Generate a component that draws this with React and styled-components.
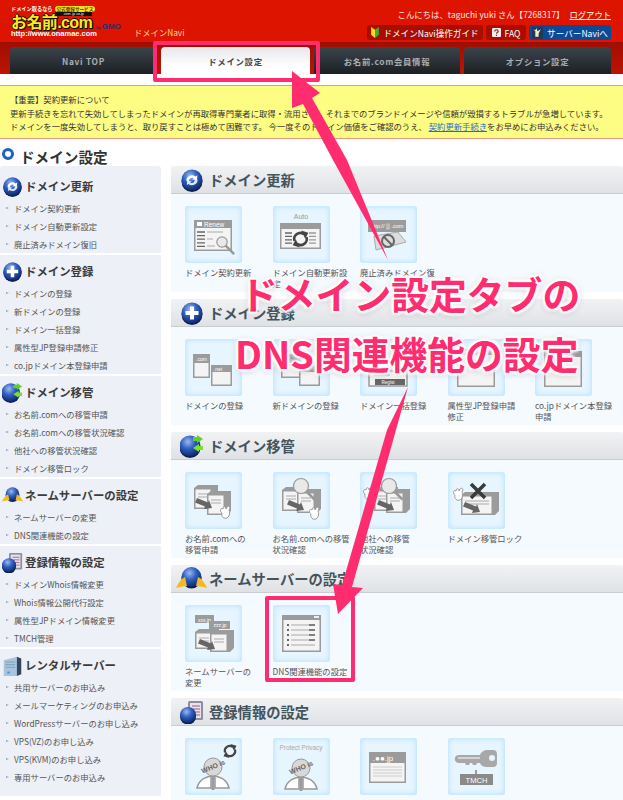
import React from 'react';
import styled, { createGlobalStyle } from 'styled-components';

const FONT = '"Noto Sans CJK JP", "Liberation Sans", sans-serif';
const PINK = '#ff2d6f';

const GlobalStyle = createGlobalStyle`
    html, body {
        margin: 0;
        height: 800px;
        overflow: hidden;
        background: #fff;
        font-family: ${FONT};
        font-size: 8.3px;
        color: #555;
    }
`;

const Page = styled.div`
    position: relative;
    width: 623px;
    height: 800px;
    overflow: hidden;
`;

/* header */
const TopBar = styled.div`
    height: 42px;
    background: #dc1400;
    display: flex;
    justify-content: space-between;
    padding: 0 12px 0 11px;
`;

const Brand = styled.div`
    display: flex;
    align-items: flex-start;
    padding-top: 5px;
`;

const Logo = styled.div`
    position: relative;
    width: 85px;
    height: 32px;
    color: #fff;
`;

const LogoTag = styled.div`
    display: flex;
    align-items: center;
    gap: 2px;
    height: 7px;
    font-size: 5.2px;
    line-height: 7px;
    font-weight: bold;
    white-space: nowrap;
`;

const LogoBadge = styled.span`
    background: #f5e020;
    color: #553300;
    border-radius: 3px;
    padding: 0 2px;
    font-size: 4.6px;
    line-height: 6px;
`;

const LogoDomains = styled.div`
    position: absolute;
    top: 7px;
    left: 44px;
    width: 37px;
    height: 4px;
    background: #111;
    color: #fff;
    font-size: 3.2px;
    line-height: 4px;
    text-align: center;
`;

const LogoName = styled.div`
    margin-top: 4px;
    height: 13px;
    font-family: "Liberation Sans", ${FONT};
    font-size: 16px;
    line-height: 13px;
    font-weight: bold;
    color: #ffe81a;
    letter-spacing: -0.6px;
    white-space: nowrap;
    text-shadow: 1px 0 0 #111, -1px 0 0 #111, 0 1px 0 #111, 0 -1px 0 #111, 1px 1px 0 #111;
`;

const LogoUrl = styled.div`
    margin-top: 1px;
    font-family: "Liberation Sans", sans-serif;
    font-size: 7.5px;
    line-height: 7px;
    font-weight: bold;
    white-space: nowrap;
`;

const ByGmo = styled.div`
    margin-top: 17px;
    width: 38px;
    font-family: "Liberation Sans", sans-serif;
    font-size: 4px;
    font-weight: bold;
    color: #27306e;
    white-space: nowrap;
    b {
        font-size: 8px;
        margin-left: 1px;
    }
`;

const NaviName = styled.div`
    margin-top: 21px;
    font-size: 8.3px;
    line-height: 12px;
    color: #ffd596;
    white-space: nowrap;
`;

const UserArea = styled.div`
    display: flex;
    flex-direction: column;
    align-items: flex-end;
    padding-top: 8px;
    gap: 5px;
`;

const Greeting = styled.div`
    height: 12px;
    line-height: 12px;
    color: #ffeaea;
    letter-spacing: 0.1px;
    white-space: nowrap;
    a {
        color: #fff;
        margin-left: 5px;
        letter-spacing: 0;
        text-decoration: underline;
    }
`;

const HeaderButtons = styled.div`
    display: flex;
    gap: 3px;
`;

const HeaderButton = styled.div`
    display: flex;
    align-items: center;
    justify-content: center;
    gap: 4px;
    width: ${(p) => p.$width}px;
    height: 15px;
    border-radius: 3px;
    background: ${(p) => (p.$blue ? '#0b4a96' : '#a80e00')};
    color: #fff;
    font-size: 8.6px;
    white-space: nowrap;
`;

const TabBar = styled.div`
    height: 32px;
    box-sizing: border-box;
    background: linear-gradient(#a00e00, #bd1400);
    padding: 5px 12px 0 10px;
    display: flex;
    gap: 4px;
`;

const Tab = styled.div`
    width: ${(p) => p.$width}px;
    border-radius: 4px 4px 0 0;
    background: ${(p) => (p.$active
        ? 'linear-gradient(#e6e6ec, #ffffff 70%)'
        : 'linear-gradient(#3c444c, #1c2024)')};
    color: ${(p) => (p.$active ? '#444' : '#a9adb0')};
    font-weight: bold;
    font-size: 8.4px;
    letter-spacing: 0.7px;
    display: flex;
    align-items: center;
    justify-content: center;
    white-space: nowrap;
`;

/* notice */
const Notice = styled.div`
    margin-top: 11px;
    height: 54px;
    box-sizing: border-box;
    background: #fdfc83;
    border-top: 1px solid #eb9a82;
    border-bottom: 1px solid #eb9a82;
    padding: 7px 0 0 10px;
    font-size: 8.33px;
    line-height: 13.5px;
    color: #333;
    white-space: nowrap;
    a {
        color: #1f6fd0;
        text-decoration: underline;
    }
`;

const Title = styled.h1`
    margin: 0;
    height: 27px;
    padding: 8px 0 0 2px;
    box-sizing: border-box;
    display: flex;
    align-items: center;
    gap: 6px;
    font-size: 14.6px;
    line-height: 18px;
    font-weight: bold;
    color: #333;
`;

const TitleBullet = styled.span`
    width: 6px;
    height: 6px;
    border: 3px solid #1a63c4;
    border-radius: 50%;
    background: #fff;
    margin-top: -6px;
`;

const Columns = styled.div`
    display: flex;
    gap: 10px;
`;

/* left menu */
const Sidebar = styled.div`
    width: 161px;
    flex: none;
    display: flex;
    flex-direction: column;
    gap: 2px;
    border-radius: 3px;
    overflow: hidden;
`;

const MenuGroup = styled.div`
    background: #edf0f6;
    padding-top: ${(p) => (p.$first ? 4 : 0)}px;
    padding-bottom: ${(p) => (p.$last ? 10 : 0)}px;
`;

const MenuHead = styled.div`
    height: 29px;
    box-sizing: border-box;
    padding: 3px 0 0 2px;
    display: flex;
    align-items: center;
    font-size: 11.4px;
    font-weight: bold;
    color: #3c3c3c;
    white-space: nowrap;
`;

const MenuIcon = styled.span`
    width: 23px;
    flex: none;
    display: flex;
    svg {
        width: 21px;
        height: 21px;
    }
`;

const MenuItem = styled.div`
    height: 18px;
    padding-left: 6px;
    display: flex;
    align-items: center;
    gap: 5px;
    white-space: nowrap;
    color: #555;
    &::before {
        content: '';
        border-left: 3px solid #9aa3ad;
        border-top: 1.5px solid transparent;
        border-bottom: 1.5px solid transparent;
    }
`;

/* right panels */
const Main = styled.div`
    flex: 1;
    display: flex;
    flex-direction: column;
    gap: 7px;
`;

const Section = styled.section`
    background: #f5fafe;
    height: 126px;
`;

const SectionHead = styled.div`
    height: 28px;
    box-sizing: border-box;
    border-bottom: 1px solid #c9cdd0;
    border-radius: 3px 3px 0 0;
    background: linear-gradient(#f1f2f4, #dfe2e5);
    display: flex;
    align-items: center;
    padding-left: ${(p) => (p.$wide ? 5 : 9)}px;
    gap: ${(p) => (p.$wide ? 2 : 5)}px;
    font-size: 14.3px;
    font-weight: bold;
    color: #43545c;
    white-space: nowrap;
    svg {
        width: ${(p) => (p.$wide ? 31 : 24)}px;
        height: 24px;
        flex: none;
    }
`;

const TileRow = styled.div`
    display: grid;
    grid-template-columns: repeat(5, 87.5px);
    padding: 12px 0 0 14px;
`;

const Tile = styled.div`
    width: 57px;
    height: 57px;
    border-radius: 3px;
    background: #e7f5ff;
    box-shadow: inset 0 0 5px 1px #b9e3ff;
    svg {
        display: block;
        width: 57px;
        height: 57px;
    }
`;

const TileLabel = styled.div`
    margin-top: 4px;
    line-height: 11.4px;
    color: #555;
    white-space: nowrap;
`;

/* annotations drawn over the page */
const TabHighlight = styled.div`
    position: absolute;
    left: 153px;
    top: 41px;
    width: 167px;
    height: 41px;
    box-sizing: border-box;
    border: 4px solid ${PINK};
    border-radius: 2px;
`;

const TileHighlight = styled.div`
    position: absolute;
    left: 265px;
    top: 596px;
    width: 90px;
    height: 86px;
    box-sizing: border-box;
    border: 4px solid ${PINK};
    border-radius: 2px;
`;

const ArrowLayer = styled.svg`
    position: absolute;
    left: 0;
    top: 0;
    width: 623px;
    height: 800px;
    pointer-events: none;
`;

const Caption = styled.div`
    position: absolute;
    left: ${(p) => p.$left}px;
    top: ${(p) => p.$top}px;
    font-family: "Noto Sans CJK JP", "Liberation Sans", sans-serif;
    font-size: 37.8px;
    line-height: 46px;
    font-weight: 700;
    color: ${PINK};
    white-space: nowrap;
    text-shadow: 0 0 2px #fff, 0 0 3px #fff, 0 0 4px #fff, 2px 2px 3px #fff, -2px -2px 3px #fff,
        2px -2px 3px #fff, -2px 2px 3px #fff, 0 1px 7px rgba(0, 0, 0, 0.35);
`;

/* icons */
const Defs = () => (
    <defs>
        <radialGradient id="globe" cx="40%" cy="30%" r="75%">
            <stop offset="0" stopColor="#9db8f0" />
            <stop offset="0.45" stopColor="#2f5fc0" />
            <stop offset="1" stopColor="#0b2260" />
        </radialGradient>
    </defs>
);

const Globe = ({ cx = 12, cy = 12, r = 10.5 }) => (
    <>
        <ellipse cx={cx} cy={cy + 1.5} rx={r} ry={r} fill="#0d1f4c" />
        <circle cx={cx} cy={cy} r={r} fill="url(#globe)" />
    </>
);

const RenewIcon = () => (
    <svg viewBox="0 0 24 24">
        <Defs />
        <Globe />
        <path d="M6.5 13a5.5 5 0 0 1 9-4.5l1.8-1.2-.3 5.2-5-1.2 1.7-1.1a3 3 0 0 0-4.6 2.6z" fill="#fff" />
        <path d="M17.500 11.500a5.500 5 0 0 1-9 4.400l-1.600 1.100.2-4.600 4.600 1-1.600 1.100a3 3 0 0 0 4.700-2.500z" fill="#dfe8fa" />
    </svg>
);

const AddIcon = () => (
    <svg viewBox="0 0 24 24">
        <Defs />
        <Globe />
        <path d="M10 5.500h4V10h4.500v4H14v4.500h-4V14H5.500v-4H10z" fill="#fff" />
    </svg>
);

const TransferIcon = () => (
    <svg viewBox="0 0 24 24">
        <Defs />
        <Globe cx={10} />
        <path d="M13 3h4V1l6 4-6 4V7h-4z" fill="#5fd02a" />
        <path d="M23 12h-4v-2l-6 4 6 4v-2h4z" fill="#7ae02c" />
    </svg>
);

const NameServerIcon = () => (
    <svg viewBox="0 0 31 24">
        <Defs />
        <Globe cx={15.5} cy={10} r={10} />
        <path d="M0 21c2-5 5-9 9-11l2 9c-4 0-7 1-11 2z" fill="#f5b81e" />
        <path d="M31 21c-2-5-5-9-9-11l-2 9c4 0 7 1 11 2z" fill="#f5b81e" />
    </svg>
);

const InfoIcon = () => (
    <svg viewBox="0 0 24 24">
        <Defs />
        <rect x="8" y="1" width="15" height="19" rx="1.500" fill="#8e8e9c" />
        <rect x="10" y="3" width="11" height="15" fill="#e8e2ee" />
        <path d="M12 6h8M12 9h8M12 12h8M12 15h8" stroke="#96607c" strokeWidth="1" />
        <Globe cx={8} cy={15} r={8} />
    </svg>
);

const ServerIcon = () => (
    <svg viewBox="0 0 24 24">
        <path d="M2 6l15-4v22H2z" fill="#a9c4dc" />
        <path d="M17 2l5 2v18l-5 2z" fill="#33465e" />
        <path d="M4 8h11M4 11h11M4 14h11" stroke="#7f9bb5" strokeWidth="1" />
        <rect x="6" y="19" width="3" height="2" fill="#2e9ee8" />
    </svg>
);

const G = '#9b9b9b';
const D = '#666';
const L = '#f4f4f4';

const Win = ({ x, y, w, h, bar = 6 }) => (
    <>
        <rect x={x} y={y} width={w} height={h} fill={G} />
        <rect x={x + 1.5} y={y + bar} width={w - 3} height={h - bar - 1.5} fill={L} />
    </>
);

const Label = ({ x, y, size = 6, fill = '#fff', anchor = 'middle', children }) => (
    <text x={x} y={y} fontSize={size} fill={fill} textAnchor={anchor} fontFamily="Liberation Sans, sans-serif">
        {children}
    </text>
);

const Rows = ({ x, y, w, n = 4, gap = 3.5, color = D }) => (
    <path
        d={Array.from({ length: n }, (_, i) => `M${x} ${y + i * gap}h${w}`).join('')}
        stroke={color}
        strokeWidth="1.3"
    />
);

const Server = ({ x, y, w = 20, h = 24 }) => (
    <>
        <path d={`M${x} ${y + 3}l4-3h${w}v${h - 4}l-4 4H${x}z`} fill={G} />
        <rect x={x + 1.5} y={y + 4.5} width={w - 5} height={h - 6} fill={L} />
        <path d={`M${x + 4} ${y + 9}h${w - 10}M${x + 4} ${y + 12}h${w - 10}`} stroke="#aaa" strokeWidth="1" />
    </>
);

const MoveArrow = ({ x, y }) => (
    <path d={`M${x} ${y}l11 4.500 1-2.500 3 8-8 1 1-2.500-10-4z`} fill={D} />
);

const Rabbit = ({ x, y }) => (
    <path
        d={`M${x} ${y + 6}c-3-2-1-6 1-4 0-3 3-3 3 0l1-2c2-2 4 0 2 3 1 2 1 6-2 8-3 1-6-1-5-5z`}
        fill="#fff"
        stroke="#999"
        strokeWidth="1"
    />
);

const Magnifier = ({ x, y, r = 8 }) => (
    <>
        <path d={`M${x + r * 0.6} ${y + r * 0.6}l9 9`} stroke="#999" strokeWidth="2.500" />
        <circle cx={x} cy={y} r={r} fill="#e9e9e9" stroke="#999" strokeWidth="1.200" />
    </>
);

const Person = ({ y = 0 }) => (
    <>
        <path d={`M12 ${50 + y}c2-9 10-12 16-12s14 3 16 12h-14v-10h-4v10z`} fill="#fff" stroke="#999" strokeWidth="1.500" />
        <rect x="26.500" y={38 + y} width="3" height="14" fill={G} />
        <circle cx="28" cy={29 + y} r="9" fill="#d8d8d8" stroke="#999" />
        <g transform={`rotate(-22 28 ${28 + y})`}>
            <text x="28" y={31 + y} fontSize="7" fontWeight="bold" textAnchor="middle" fill={D} fontFamily="Liberation Sans, sans-serif">WHO is</text>
        </g>
    </>
);

const RefreshHalf = ({ cx, cy, r }) => (
    <>
        <path
            d={`M${cx - r} ${cy + r * 0.3}A${r} ${r} 0 0 1 ${cx + r * 0.55} ${cy - r * 0.8}`}
            fill="none"
            stroke="#444"
            strokeWidth={r * 0.42}
        />
        <path d={`M${cx + r * 0.1} ${cy - r * 1.4}L${cx + r * 1.3} ${cy - r * 1.05}L${cx + r * 0.8} ${cy - r * 0.05}z`} fill="#444" />
    </>
);

const Refresh = ({ cx, cy, r }) => (
    <>
        <RefreshHalf cx={cx} cy={cy} r={r} />
        <g transform={`rotate(180 ${cx} ${cy})`}>
            <RefreshHalf cx={cx} cy={cy} r={r} />
        </g>
    </>
);

const tileIcons = {
    renew: (
        <>
            <Win x={9} y={14} w={38} h={31} bar={8} />
            <rect x="12" y="16" width="5" height="4" fill="#fff" />
            <Label x={19} y={20.5} anchor="start" size={6.5}>Renew</Label>
            <Rows x={12} y={26} w={8} n={5} gap={3.6} />
            <path d="M22 26h16M22 33h6M22 40h8" stroke="#999" strokeWidth="0.800" />
            <Magnifier x={37} y={36} r={5.2} />
        </>
    ),
    auto: (
        <>
            <Label x={28} y={13} size={7} fill="#999">Auto</Label>
            <Win x={7} y={17} w={41} h={26} bar={6} />
            <Rows x={12} y={27} w={7} n={4} gap={3.4} />
            <Rows x={36} y={27} w={7} n={4} gap={3.4} color="#999" />
            <Refresh cx={27.5} cy={33} r={6} />
        </>
    ),
    broken: (
        <>
            <rect x="8" y="14" width="38" height="12" fill={G} />
            <Label x={27} y={22} size={5.5}>http:// ▒ .com</Label>
            <path d="M14 30l24-4 8 10-30 8z" fill="#ddd" stroke="#aaa" />
            <circle cx="28" cy="35" r="6" fill="none" stroke="#666" strokeWidth="2" />
            <path d="M24 31l8 8" stroke="#666" strokeWidth="2" />
        </>
    ),
    domains: (
        <>
            <Win x={8} y={15} w={17} h={24} bar={9} />
            <Label x={16.5} y={22} size={5}>.com</Label>
            <Win x={26} y={26} w={21} h={21} bar={7} />
            <Label x={33} y={32} size={5}>.net</Label>
        </>
    ),
    newDomain: (
        <>
            <Win x={8} y={15} w={20} h={24} bar={9} />
            <Win x={26} y={26} w={21} h={21} bar={7} />
        </>
    ),
    bulk: (
        <>
            <rect x="9" y="32" width="38" height="15" fill={L} stroke={G} strokeWidth="1.500" />
            <path d="M14 36h16" stroke="#999" />
            <rect x="15" y="40" width="30" height="6" fill={D} />
            <Label x={28} y={45} size={4.6}>Regist</Label>
        </>
    ),
    jp: <Win x={9} y={10} w={38} h={38} bar={6} />,
    cojp: (
        <>
            <Win x={9} y={12} w={38} h={36} bar={6} />
            <Label x={28} y={17} size={4.5} fill="#777">.jp</Label>
        </>
    ),
    transfer: (
        <>
            <Server x={9} y={13} />
            <Server x={22} y={19} />
            <MoveArrow x={12} y={26} />
            <Rabbit x={37} y={35} />
        </>
    ),
    transferCheck: (
        <>
            <Server x={9} y={15} />
            <Server x={24} y={17} />
            <Magnifier x={28} y={14} r={7.5} />
            <MoveArrow x={16} y={28} />
            <Rabbit x={38} y={36} />
        </>
    ),
    transferOther: (
        <>
            <Server x={14} y={15} />
            <Server x={26} y={17} />
            <Magnifier x={29} y={14} r={7.5} />
            <MoveArrow x={19} y={28} />
            <Rabbit x={5} y={16} />
        </>
    ),
    lock: (
        <>
            <Server x={13} y={20} w={34} h={23} />
            <MoveArrow x={17} y={30} />
            <Rabbit x={7} y={17} />
            <path d="M23 12l14 14M37 12L23 26" stroke="#3a3a3a" strokeWidth="3.500" />
        </>
    ),
    nameServer: (
        <>
            <rect x="10" y="10" width="19" height="8" fill={G} />
            <Label x={19.5} y={16.5} size={5}>xxx.jp</Label>
            <rect x="24" y="16" width="21" height="8" fill={G} />
            <Label x={35} y={22} size={5}>zzz.jp</Label>
            <Server x={10} y={24} h={20} />
            <Server x={25} y={25} w={20} h={22} />
            <MoveArrow x={15} y={34} />
        </>
    ),
    dns: (
        <>
            <Win x={9} y={10} w={39} h={37} bar={5} />
            <rect x="41" y="11" width="5" height="2" fill="#eee" />
            <path d="M14 19h2v2h-2zM14 24h2v2h-2zM14 29h2v2h-2zM14 34h2v2h-2zM14 39h2v2h-2z" fill={D} />
            <path d="M18 20h24M18 25h24M18 30h24M18 35h24M18 40h24" stroke="#aaa" />
            <path d="M36 20h6M36 25h6M36 30h6M36 35h6" stroke={D} strokeWidth="1.300" />
        </>
    ),
    whois: (
        <>
            <Person />
            <Refresh cx={45} cy={13} r={5} />
        </>
    ),
    privacy: (
        <>
            <Label x={28} y={12} size={6.4} fill="#aaa">Protect Privacy</Label>
            <Person y={1} />
        </>
    ),
    jpWindow: (
        <>
            <Win x={9} y={14} w={37} h={31} bar={11} />
            <Label x={23} y={23} size={8}>.●●.jp</Label>
            <path d="M13 29h29M13 32h29M13 35h29M13 38h29" stroke="#ccc" />
        </>
    ),
    key: (
        <>
            <path d="M7 20c0-2 2-3 4-3h21c1-3 4-5 8-5h5c3 0 4 2 4 4v9c0 2-1 4-4 4h-6c-3 0-6-1-7-4h-3l-1 2h-3l-1-2h-2l-1 2h-3l-1-2h-6c-3 0-5-3-4-5z" fill="#a8a8a8" />
            <path d="M10 20h22" stroke="#f0f0f0" strokeWidth="1.200" />
            <circle cx="44" cy="20" r="3" fill="#e7f5ff" />
            <rect x="27" y="32" width="2" height="4" fill={G} />
            <rect x="12" y="36" width="33" height="11" fill="#8a8a8a" />
            <Label x={28.5} y={44.5} size={7.6}>TMCH</Label>
        </>
    ),
};

const menuGroups = [
    { icon: <RenewIcon />, title: 'ドメイン更新', items: ['ドメイン契約更新', 'ドメイン自動更新設定', '廃止済みドメイン復旧'] },
    { icon: <AddIcon />, title: 'ドメイン登録', items: ['ドメインの登録', '新ドメインの登録', 'ドメイン一括登録', '属性型JP登録申請修正', 'co.jpドメイン本登録申請'] },
    { icon: <TransferIcon />, title: 'ドメイン移管', items: ['お名前.comへの移管申請', 'お名前.comへの移管状況確認', '他社への移管状況確認', 'ドメイン移管ロック'] },
    { icon: <NameServerIcon />, title: 'ネームサーバーの設定', items: ['ネームサーバーの変更', 'DNS関連機能の設定'] },
    { icon: <InfoIcon />, title: '登録情報の設定', items: ['ドメインWhois情報変更', 'Whois情報公開代行設定', '属性型JPドメイン情報変更', 'TMCH管理'] },
    { icon: <ServerIcon />, title: 'レンタルサーバー', items: ['共用サーバーのお申込み', 'メールマーケティングのお申込み', 'WordPressサーバーのお申し込み', 'VPS(VZ)のお申し込み', 'VPS(KVM)のお申し込み', '専用サーバーのお申込み'] },
];

const panels = [
    {
        icon: <RenewIcon />,
        title: 'ドメイン更新',
        tiles: [
            ['renew', ['ドメイン契約更新']],
            ['auto', ['ドメイン自動更新設', '定']],
            ['broken', ['廃止済みドメイン復', '旧']],
        ],
    },
    {
        icon: <AddIcon />,
        title: 'ドメイン登録',
        tiles: [
            ['domains', ['ドメインの登録']],
            ['newDomain', ['新ドメインの登録']],
            ['bulk', ['ドメイン一括登録']],
            ['jp', ['属性型JP登録申請', '修正']],
            ['cojp', ['co.jpドメイン本登録', '申請']],
        ],
    },
    {
        icon: <TransferIcon />,
        title: 'ドメイン移管',
        tiles: [
            ['transfer', ['お名前.comへの', '移管申請']],
            ['transferCheck', ['お名前.comへの移管', '状況確認']],
            ['transferOther', ['他社への移管', '状況確認']],
            ['lock', ['ドメイン移管ロック']],
        ],
    },
    {
        icon: <NameServerIcon />,
        wide: true,
        title: 'ネームサーバーの設定',
        tiles: [
            ['nameServer', ['ネームサーバーの', '変更']],
            ['dns', ['DNS関連機能の設定']],
        ],
    },
    {
        icon: <InfoIcon />,
        title: '登録情報の設定',
        tiles: [
            ['whois', ['ドメインWhois情報', '変更']],
            ['privacy', ['Whois情報公開代行', '設定']],
            ['jpWindow', ['属性型JPドメイン', '情報変更']],
            ['key', ['TMCH管理']],
        ],
    },
];

export default function App() {
    return (
        <Page>
            <GlobalStyle />
            <TopBar>
                <Brand>
                    <Logo>
                        <LogoTag>
                            ドメイン取るなら<LogoBadge>公式登録サービス</LogoBadge>
                        </LogoTag>
                        <LogoDomains>.com .jp .co.jp</LogoDomains>
                        <LogoName>お名前.com</LogoName>
                        <LogoUrl>http://www.onamae.com</LogoUrl>
                    </Logo>
                    <ByGmo>by<b>GMO</b></ByGmo>
                    <NaviName>ドメインNavi</NaviName>
                </Brand>
                <UserArea>
                    <Greeting>
                        こんにちは、taguchi yuki さん【7268317】<a href="#logout">ログアウト</a>
                    </Greeting>
                    <HeaderButtons>
                        <HeaderButton $width={116}>
                            <svg width="8" height="11" viewBox="0 0 7 10">
                                <path d="M0 0l3.500 2.500V10L0 7z" fill="#f5e020" />
                                <path d="M7 0L3.500 2.500V10L7 7z" fill="#3fae3a" />
                            </svg>
                            ドメインNavi操作ガイド
                        </HeaderButton>
                        <HeaderButton $width={40}>
                            <svg width="9" height="9" viewBox="0 0 8 8">
                                <rect width="8" height="8" rx="1" fill="#eee" />
                                <path d="M2.500 3c0-2 3-2 3 0 0 1-1.500 1-1.500 2M4 6v1" stroke="#a80e00" fill="none" />
                            </svg>
                            FAQ
                        </HeaderButton>
                        <HeaderButton $width={82} $blue>
                            <svg width="11" height="12" viewBox="0 0 10 11">
                                <rect width="10" height="11" fill="#24365c" />
                                <path d="M3 9V4L1 2l2 1 1-2 1 3 3-2-2 4v3z" fill="#f2efc8" />
                            </svg>
                            サーバーNaviへ
                        </HeaderButton>
                    </HeaderButtons>
                </UserArea>
            </TopBar>
            <TabBar>
                <Tab $width={147}>Navi TOP</Tab>
                <Tab $width={149} $active>ドメイン設定</Tab>
                <Tab $width={146}>お名前.com会員情報</Tab>
                <Tab $width={147}>オプション設定</Tab>
            </TabBar>
            <Notice>
                【重要】契約更新について
                <br />
                更新手続きを忘れて失効してしまったドメインが再取得専門業者に取得・流用され、それまでのブランドイメージや信頼が毀損するトラブルが急増しています。
                <br />
                ドメインを一度失効してしまうと、取り戻すことは極めて困難です。 今一度そのドメイン価値をご確認のうえ、 <a href="#renew">契約更新手続き</a>をお早めにお申込みください。
            </Notice>
            <Title>
                <TitleBullet />
                ドメイン設定
            </Title>
            <Columns>
                <Sidebar>
                    {menuGroups.map((group, i) => (
                        <MenuGroup key={group.title} $first={i === 0} $last={i === menuGroups.length - 1}>
                            <MenuHead>
                                <MenuIcon>{group.icon}</MenuIcon>
                                {group.title}
                            </MenuHead>
                            {group.items.map((item) => (
                                <MenuItem key={item}>{item}</MenuItem>
                            ))}
                        </MenuGroup>
                    ))}
                </Sidebar>
                <Main>
                    {panels.map((panel) => (
                        <Section key={panel.title}>
                            <SectionHead $wide={panel.wide}>
                                {panel.icon}
                                {panel.title}
                            </SectionHead>
                            <TileRow>
                                {panel.tiles.map(([icon, lines]) => (
                                    <div key={icon}>
                                        <Tile>
                                            <svg viewBox="0 0 57 57">{tileIcons[icon]}</svg>
                                        </Tile>
                                        <TileLabel>
                                            {lines.map((line) => (
                                                <div key={line}>{line}</div>
                                            ))}
                                        </TileLabel>
                                    </div>
                                ))}
                            </TileRow>
                        </Section>
                    ))}
                </Main>
            </Columns>
            <TabHighlight />
            <TileHighlight />
            <ArrowLayer viewBox="0 0 623 800">
                <path d="M292 71L320 93 312 98 347 160 388 260 333 160 303 104 292 108z" fill={PINK} />
                <path d="M408 387L352 587 363 588 338 614 333 584 342 585 387 430z" fill={PINK} />
            </ArrowLayer>
            <Caption $left={240} $top={270}>ドメイン設定タブの</Caption>
            <Caption $left={235} $top={330}>DNS関連機能の設定</Caption>
        </Page>
    );
}
